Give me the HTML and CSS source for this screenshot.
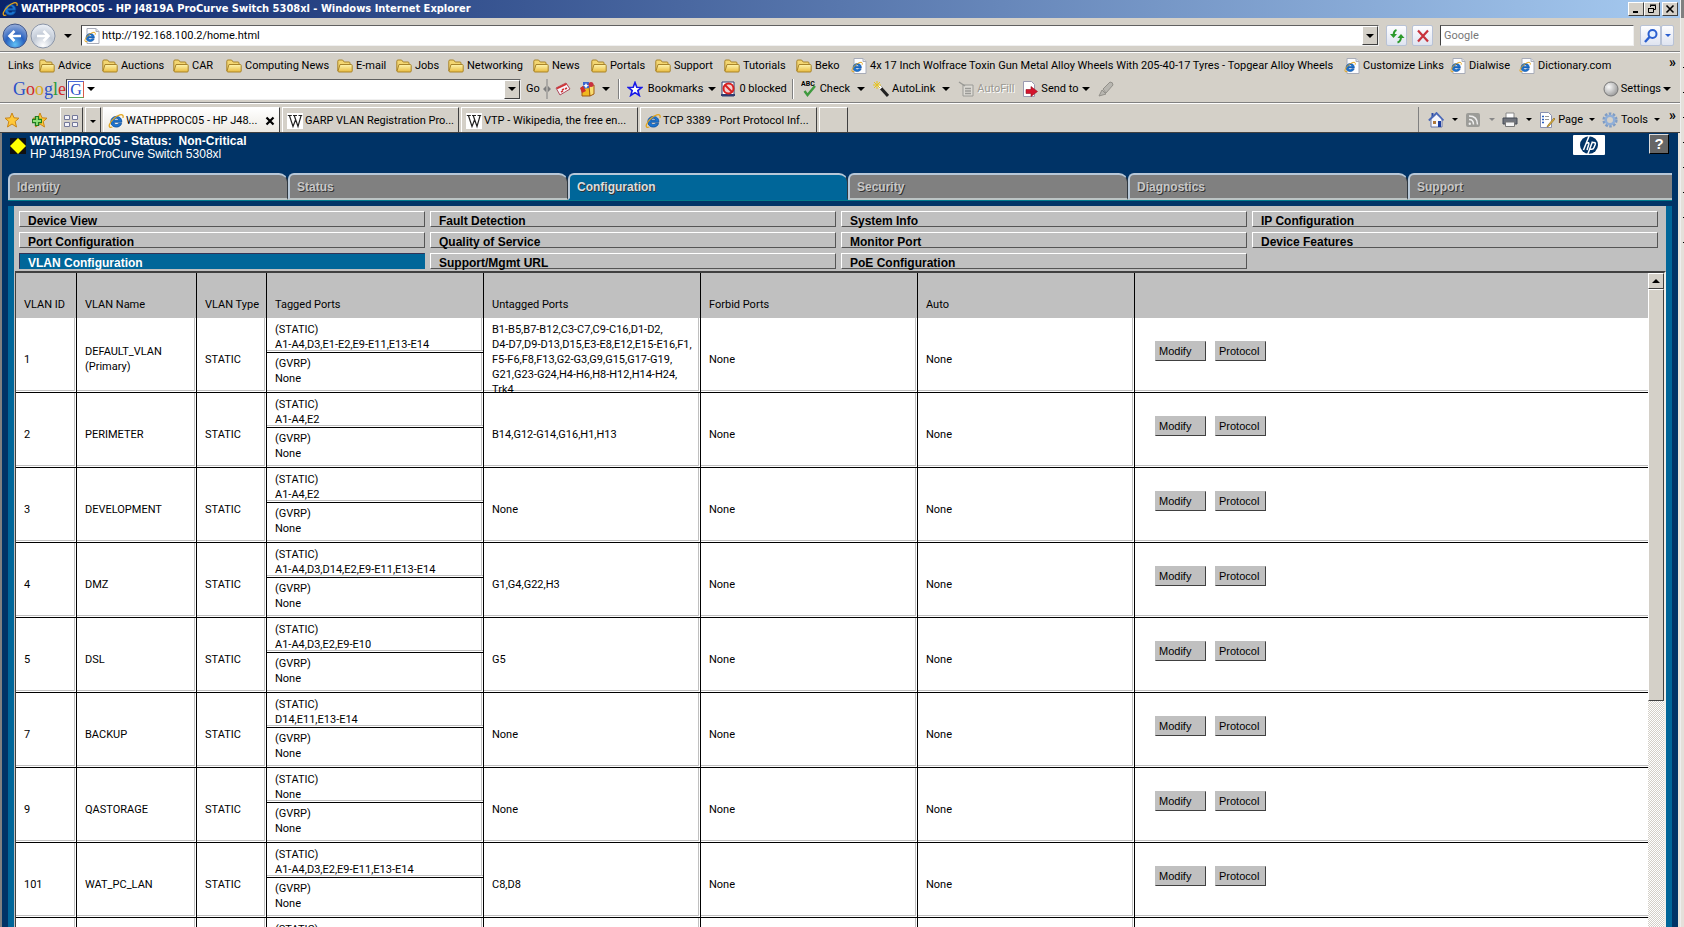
FILE: index.html
```
<!DOCTYPE html>
<html lang="en">
<head>
<meta charset="utf-8">
<title>WATHPPROC05 - HP J4819A ProCurve Switch 5308xl</title>
<link rel="stylesheet" href="styles.css">
</head>
<body>
<svg class="defs" aria-hidden="true">
  <defs>
    <linearGradient id="gFolder" x1="0" y1="0" x2="0" y2="1"><stop offset="0" stop-color="#fff6b0"/><stop offset="1" stop-color="#e8b93c"/></linearGradient>
    <radialGradient id="gBack" cx=".5" cy=".85" r=".8"><stop offset="0" stop-color="#5fc0f5"/><stop offset=".5" stop-color="#2a62c0"/><stop offset="1" stop-color="#8fa8d8"/></radialGradient>
    <radialGradient id="gFwd" cx=".5" cy=".9" r=".9"><stop offset="0" stop-color="#ffffff"/><stop offset=".5" stop-color="#c2cad6"/><stop offset="1" stop-color="#eef2f8"/></radialGradient>
    <radialGradient id="gBall" cx=".35" cy=".35" r=".7"><stop offset="0" stop-color="#fafafa"/><stop offset="1" stop-color="#9a9a9a"/></radialGradient>
  </defs>
  <symbol id="folder" viewBox="0 0 16 16"><path d="M.8 13V3.200Q.8 2 2 2h3.600l1.600 2H12q1 0 1 1v1.600" fill="#f3d672" stroke="#a9842a"/><path d="M3 6.500h11.200q1 0 1 1V13q0 1-1 1H2q-1 0-1-1z" fill="url(#gFolder)" stroke="#a9842a"/></symbol>
  <symbol id="ie" viewBox="0 0 16 16"><path d="M13.800 9.200H5.900c.2 1.500 1.200 2.300 2.500 2.300 1 0 1.700-.4 2.100-1.100h3.100c-.7 2.200-2.600 3.700-5.200 3.700-3.400 0-5.600-2.200-5.600-5.300 0-3.200 2.300-5.400 5.600-5.400 3.500 0 5.600 2.400 5.400 5.800zM6 7.200h4.600C10.500 6 9.600 5.200 8.300 5.200 7.100 5.200 6.200 6 6 7.200z" fill="#1b74d0" stroke="#0d4c9c" stroke-width=".8"/><path d="M14.900 4.900c.8-2.400-.4-3.700-3-3C7.800 3 3 7.500 1.500 11.500c-.8 2.300.3 3.500 2.800 2.500" fill="none" stroke="#e3a51c" stroke-width="1.300"/></symbol>
  <symbol id="iepage" viewBox="0 0 16 16"><path d="M3 .5h9l3 3v12H3z" fill="#fdfdff" stroke="#a8acb8"/><path d="M12 .5v3h3" fill="#dfe4ee" stroke="#a8acb8"/><svg x="0" y="3" width="12" height="12"><use href="#ie" width="12" height="12"/></svg></symbol>
  <symbol id="wiki" viewBox="0 0 16 16"><path d="M0 0h16v16H0z" fill="#fff"/><path d="M.8 2.500h4M6 2.500h4M11.500 2.500h3.700M2.500 2.800L6 13.500l2.500-6.500M7.300 2.800L11 13.500 14 2.800" fill="none" stroke="#222" stroke-width="1.200"/></symbol>
  <symbol id="star" viewBox="0 0 16 16"><path d="M8 1l2 4.800 5 .4-3.800 3.300L12.500 15 8 12l-4.500 3 1.300-5.500L1 6.200l5-.4z" fill="#ffc93a" stroke="#c98518"/></symbol>
</svg>

<div class="desktop">
<div class="window">
  <header class="titlebar">
    <svg class="i16"><use href="#ie"/></svg>
    <h1>WATHPPROC05 - HP J4819A ProCurve Switch 5308xl - Windows Internet Explorer</h1>
    <div class="winbtns">
      <button aria-label="Minimize"><svg viewBox="0 0 12 10"><path d="M3 8h5" stroke="#000" stroke-width="2"/></svg></button>
      <button aria-label="Restore"><svg viewBox="0 0 12 10"><path d="M4.500 3V1.500h5v4H8M4 1h6M2.500 4.500h5v4h-5zM2 4.500h6" fill="none" stroke="#000"/></svg></button>
      <button aria-label="Close" class="close"><svg viewBox="0 0 12 10"><path d="M2.500 1.500l7 7M9.500 1.500l-7 7" stroke="#000" stroke-width="1.600"/></svg></button>
    </div>
  </header>

  <div class="navrow">
    <div class="travel">
      <button aria-label="Back"><svg width="26" height="26" viewBox="0 0 26 26"><circle cx="13" cy="13" r="12" fill="url(#gBack)" stroke="#43598c"/><path d="M19 13H8M12.500 8L7.500 13l5 5" fill="none" stroke="#fff" stroke-width="2.600"/></svg></button>
      <button aria-label="Forward"><svg width="26" height="26" viewBox="0 0 26 26"><circle cx="13" cy="13" r="12" fill="url(#gFwd)" stroke="#8a94a6"/><path d="M7 13h11M13.500 8l5 5-5 5" fill="none" stroke="#fff" stroke-width="2.600"/></svg></button>
      <span class="caret"></span>
    </div>
    <div class="field address">
      <svg class="i16"><use href="#iepage"/></svg>
      <input type="text" aria-label="Address" value="http://192.168.100.2/home.html">
      <button class="drop" aria-label="Show addresses"><span class="caret"></span></button>
    </div>
    <button class="soft" aria-label="Refresh"><svg class="i16" viewBox="0 0 16 16"><path d="M7.500 2Q4.500 3 4.500 8" fill="none" stroke="#2c9a2c" stroke-width="2"/><path d="M1 6h7l-3.500 4z" fill="#2c9a2c"/><path d="M8.500 14.500q3.500-1 3.500-6" fill="none" stroke="#2c9a2c" stroke-width="2"/><path d="M8.500 10h7L12 6z" fill="#2c9a2c"/></svg></button>
    <button class="soft" aria-label="Stop"><svg class="i16" viewBox="0 0 16 16"><path d="M3 2.500l10 11M13 2.500l-10 11" stroke="#c8323c" stroke-width="2.200"/></svg></button>
    <div class="field search"><input type="text" aria-label="Search" placeholder="Google"></div>
    <div class="pair">
      <button class="soft" aria-label="Go search"><svg class="i16" viewBox="0 0 16 16"><circle cx="9.500" cy="6" r="4" fill="#e4f0ff" stroke="#2a5fd0" stroke-width="2"/><path d="M6.500 9L2 14" stroke="#2a5fd0" stroke-width="2.400"/></svg></button>
      <button class="soft thin" aria-label="Search options"><span class="caret blue"></span></button>
    </div>
  </div>

  <nav class="links" aria-label="Links">
    <span>Links</span>
    <a href="#"><svg class="i16"><use href="#folder"/></svg>Advice</a>
    <a href="#"><svg class="i16"><use href="#folder"/></svg>Auctions</a>
    <a href="#"><svg class="i16"><use href="#folder"/></svg>CAR</a>
    <a href="#"><svg class="i16"><use href="#folder"/></svg>Computing News</a>
    <a href="#"><svg class="i16"><use href="#folder"/></svg>E-mail</a>
    <a href="#"><svg class="i16"><use href="#folder"/></svg>Jobs</a>
    <a href="#"><svg class="i16"><use href="#folder"/></svg>Networking</a>
    <a href="#"><svg class="i16"><use href="#folder"/></svg>News</a>
    <a href="#"><svg class="i16"><use href="#folder"/></svg>Portals</a>
    <a href="#"><svg class="i16"><use href="#folder"/></svg>Support</a>
    <a href="#"><svg class="i16"><use href="#folder"/></svg>Tutorials</a>
    <a href="#"><svg class="i16"><use href="#folder"/></svg>Beko</a>
    <a href="#"><svg class="i16"><use href="#iepage"/></svg>4x 17 Inch Wolfrace Toxin Gun Metal Alloy Wheels With 205-40-17 Tyres - Topgear Alloy Wheels</a>
    <a href="#"><svg class="i16"><use href="#iepage"/></svg>Customize Links</a>
    <a href="#"><svg class="i16"><use href="#iepage"/></svg>Dialwise</a>
    <a href="#"><svg class="i16"><use href="#iepage"/></svg>Dictionary.com</a>
    <b class="more">»</b>
  </nav>

  <div class="google">
    <span class="glogo"><i class="b">G</i><i class="r">o</i><i class="y">o</i><i class="b">g</i><i class="g">l</i><i class="r">e</i></span>
    <div class="field gfield">
      <span class="gbox">G</span><span class="caret"></span>
      <input type="text" aria-label="Google search">
      <button class="drop" aria-label="Search history"><span class="caret"></span></button>
    </div>
    <button class="t go">Go</button>
    <svg class="split" viewBox="0 0 10 20"><path d="M5 0v20" stroke="#808080"/><path d="M4 7v6L1 10zM6 7v6l3-3z" fill="#808080"/></svg>
    <button class="t" aria-label="News"><svg class="i16" viewBox="0 0 16 16"><path d="M1 7l10-5 4 6-10 6z" fill="#f5f2f8" stroke="#b04a5a"/><path d="M2 7.500l9.500-4.500M7 9l2-1M10 8l2-1M6 11l2-1" stroke="#d03030" stroke-width="1.600"/></svg></button>
    <button class="t" aria-label="Gadgets"><svg class="i16" viewBox="0 0 16 16"><path d="M3 6h8v9H3z" fill="#f0b820" stroke="#a05a10"/><path d="M10 5l5-1v9l-4 2z" fill="#f8dc70" stroke="#a05a10"/><path d="M4 1l6 0 0 6-6 1z" fill="#3a66d0"/><path d="M1 7l3-2 3 5-4 2z" fill="#d0302a"/><circle cx="12" cy="3.500" r="2.500" fill="#c83040"/><path d="M7 2l1 2 2 .5-2 1-1 2-1-2-2-1 2-.5z" fill="#fff"/></svg><span class="caret far"></span></button>
    <span class="sep"></span>
    <button class="t bookmarks"><svg class="i16" viewBox="0 0 16 16"><path d="M8 1.500l1.800 4.700 5 .2-4 3.200 1.500 4.900L8 11.700l-4.300 2.800 1.500-4.900-4-3.200 5-.2z" fill="#fff" stroke="#1818e8" stroke-width="1.600"/></svg>Bookmarks<span class="caret"></span></button>
    <button class="t blocked"><svg class="i16" viewBox="0 0 16 16"><path d="M2 1h12v14H2z" fill="#fff" stroke="#303c70"/><path d="M1 14h14" stroke="#303c70" stroke-width="2"/><circle cx="8.500" cy="7.500" r="5" fill="#f4d0d0" stroke="#d82020" stroke-width="2"/><path d="M5 4l7 7" stroke="#d82020" stroke-width="2"/></svg>0 blocked</button>
    <span class="sep"></span>
    <button class="t"><svg class="i16" viewBox="0 0 16 16"><text x="0" y="5" class="abc">ABC</text><path d="M3.500 10l3 4L14 5" fill="none" stroke="#3f9a3f" stroke-width="2.400"/></svg>Check<span class="caret far"></span></button>
    <button class="t"><svg class="i16" viewBox="0 0 16 16"><path d="M6 5l9 10" stroke="#222" stroke-width="3"/><path d="M5.500 4.500l2.500 3" stroke="#fff" stroke-width="3"/><path d="M4 0v8M0 4h8M1 1l6 6M7 1L1 7" stroke="#e6c21c"/></svg>AutoLink<span class="caret far"></span></button>
    <button class="t off" disabled><svg class="i16" viewBox="0 0 16 16"><path d="M5 4h10v11H5z" fill="#dcdad4" stroke="#9a9a96"/><path d="M7 7.500h6M7 10h6M7 12.500h6M1 1l6 4" stroke="#9a9a96" stroke-width="1.500"/></svg>AutoFill</button>
    <button class="t"><svg class="i16" viewBox="0 0 16 16"><path d="M1.500.5h8l3 3v12h-11z" fill="#fff" stroke="#9a9ab0"/><path d="M4 8.500h5V5.500l6.500 5L9 15.500v-3H4z" fill="#d4142c" stroke="#901020" stroke-width=".6"/></svg>Send to<span class="caret"></span></button>
    <button class="t off" disabled aria-label="Highlight"><svg class="i16" viewBox="0 0 16 16"><path d="M1 15l3-6 4 4zM5 8l7-7q3 0 3 3l-7 8z" fill="#b8b6b0" stroke="#92908a"/></svg></button>
    <button class="t settings"><svg class="i16" viewBox="0 0 16 16"><circle cx="8" cy="8" r="7" fill="url(#gBall)" stroke="#777"/></svg>Settings<span class="caret"></span></button>
  </div>

  <div class="tabrow">
    <button class="fav" aria-label="Favorites"><svg class="i16"><use href="#star"/></svg></button>
    <button class="fav" aria-label="Add to favorites"><svg class="i16" viewBox="0 0 16 16"><use href="#star"/><path d="M5 4v10M0 9h10" stroke="#1f7d1f" stroke-width="4.400"/><path d="M5 5v8M1 9h8" stroke="#8ee07a" stroke-width="1.800"/></svg></button>
    <button class="tab quad" aria-label="Quick tabs"><svg class="i16" viewBox="0 0 16 16"><path d="M1.500 2.500h5v4h-5zM9.500 2.500h5v4h-5zM1.500 9.500h5v4h-5zM9.500 9.500h5v4h-5z" fill="#f4f4fa" stroke="#74789a"/></svg></button>
    <button class="tab list" aria-label="Tab list"><span class="caret small"></span></button>
    <button class="tab on"><svg class="i16"><use href="#ie"/></svg>WATHPPROC05 - HP J48...<svg class="x" viewBox="0 0 10 10"><path d="M1.500 1.500l7 7M8.500 1.500l-7 7" stroke="#000" stroke-width="2.200"/></svg></button>
    <button class="tab"><svg class="i16"><use href="#wiki"/></svg>GARP VLAN Registration Pro...</button>
    <button class="tab"><svg class="i16"><use href="#wiki"/></svg>VTP - Wikipedia, the free en...</button>
    <button class="tab"><svg class="i16"><use href="#ie"/></svg>TCP 3389 - Port Protocol Inf...</button>
    <button class="tab new" aria-label="New tab"></button>
    <div class="cmds">
      <button class="c" aria-label="Home"><svg class="i16" viewBox="0 0 16 16"><path d="M3 7v8h11V7L8.500 2z" fill="#f6f6fc" stroke="#6a78a8"/><path d="M3.500 1h2v4h-2z" fill="#2a4aa8"/><path d="M.8 8.500L8.500 1l7 7.500" fill="none" stroke="#4a68b8" stroke-width="1.800"/><path d="M10 9h3v6h-3z" fill="#1f3fa0"/><path d="M5 9h3v3H5z" fill="#b07838"/></svg><span class="caret small"></span></button>
      <button class="c" aria-label="Feeds"><svg class="i16" viewBox="0 0 16 16"><rect x="1" y="1" width="14" height="14" rx="2" fill="#9c9c98"/><path d="M4 7.500q4.500 0 4.500 5M4 4q8.500 0 8.500 8.500" fill="none" stroke="#eee" stroke-width="1.500"/><circle cx="4.800" cy="11.800" r="1.200" fill="#eee"/></svg><span class="caret small gray"></span></button>
      <button class="c" aria-label="Print"><svg class="i16" viewBox="0 0 16 16"><path d="M4 1h8v6H4z" fill="#fff" stroke="#888"/><path d="M1 6h14v6H1z" fill="#70747c" stroke="#444a54"/><path d="M3.500 10h9v4.500h-9z" fill="#f4f4f4" stroke="#777"/></svg><span class="caret small"></span></button>
      <button class="c page"><svg class="i16" viewBox="0 0 16 16"><path d="M1.500.5h8l3 3v12h-11z" fill="#fff" stroke="#8890b0"/><path d="M3 4.500h2M3 7.500h2M3 10.500h2" stroke="#2a5fc0" stroke-width="1.500"/><path d="M6 4.500h4M6 7.500h4" stroke="#999"/><path d="M15 6l-6 7-1 2 2-1 6-7z" fill="#e8b83c" stroke="#8a6a20" stroke-width=".7"/></svg>Page<span class="caret small"></span></button>
      <button class="c tools"><svg class="i16" viewBox="0 0 16 16"><circle cx="8" cy="8" r="6.300" fill="none" stroke="#7f9cc4" stroke-width="2.600" stroke-dasharray="2.500 1.460"/><circle cx="8" cy="8" r="4.300" fill="#d4d0c8" stroke="#8faed8" stroke-width="2.600"/></svg>Tools<span class="caret small"></span></button>
      <b class="more">»</b>
    </div>
  </div>

  <main class="page-area">
    <div class="device">
      <svg class="i16" viewBox="0 0 16 16"><path d="M0 0h16v16H0z" fill="#111"/><path d="M8 0l8 8-8 8-8-8z" fill="#ff0"/></svg>
      <div class="ident"><strong>WATHPPROC05 - Status:&nbsp; Non-Critical</strong><span>HP J4819A ProCurve Switch 5308xl</span></div>
      <svg class="hp" viewBox="0 0 32 20" role="img" aria-label="hp"><rect width="32" height="20" rx="1" fill="#fff"/><ellipse cx="16" cy="10" rx="9" ry="8.800" fill="#036"/><path d="M16.500 0L10.500 15M13 8.500q3.500-2 2.700 1L14 15M19.500 6.500L14.500 20M18.500 7.500h2.500q1.800 0 1.200 2L21 12.500q-.6 1.800-2.500 1.800h-1.500" fill="none" stroke="#fff" stroke-width="1.500"/></svg>
      <button class="help">?</button>
    </div>
    <nav class="maintabs" aria-label="Sections">
      <a href="#">Identity</a><a href="#">Status</a><a href="#" class="sel">Configuration</a><a href="#">Security</a><a href="#">Diagnostics</a><a href="#">Support</a>
    </nav>
    <section class="frame">
      <nav class="subnav" aria-label="Configuration">
        <a href="#">Device View</a><a href="#">Fault Detection</a><a href="#">System Info</a><a href="#">IP Configuration</a>
        <a href="#">Port Configuration</a><a href="#">Quality of Service</a><a href="#">Monitor Port</a><a href="#">Device Features</a>
        <a href="#" class="sel">VLAN Configuration</a><a href="#">Support/Mgmt URL</a><a href="#">PoE Configuration</a>
      </nav>
      <div class="listing">
        <div class="scroller">
        <table>
          <colgroup><col class="c1"><col class="c2"><col class="c3"><col class="c4"><col class="c4"><col class="c4"><col class="c4"><col></colgroup>
          <thead><tr><th>VLAN ID</th><th>VLAN Name</th><th>VLAN Type</th><th>Tagged Ports</th><th>Untagged Ports</th><th>Forbid Ports</th><th>Auto</th><th></th></tr></thead>
          <tbody>
            <tr><td><div>1</div></td><td><div>DEFAULT_VLAN<br>(Primary)</div></td><td><div>STATIC</div></td><td class="tg"><p>(STATIC)<br>A1-A4,D3,E1-E2,E9-E11,E13-E14</p><p>(GVRP)<br>None</p></td><td><div>B1-B5,B7-B12,C3-C7,C9-C16,D1-D2,<br>D4-D7,D9-D13,D15,E3-E8,E12,E15-E16,F1,<br>F5-F6,F8,F13,G2-G3,G9,G15,G17-G19,<br>G21,G23-G24,H4-H6,H8-H12,H14-H24,<br>Trk4</div></td><td><div>None</div></td><td><div>None</div></td><td class="act"><button>Modify</button><button>Protocol</button></td></tr>
            <tr><td><div>2</div></td><td><div>PERIMETER</div></td><td><div>STATIC</div></td><td class="tg"><p>(STATIC)<br>A1-A4,E2</p><p>(GVRP)<br>None</p></td><td><div>B14,G12-G14,G16,H1,H13</div></td><td><div>None</div></td><td><div>None</div></td><td class="act"><button>Modify</button><button>Protocol</button></td></tr>
            <tr><td><div>3</div></td><td><div>DEVELOPMENT</div></td><td><div>STATIC</div></td><td class="tg"><p>(STATIC)<br>A1-A4,E2</p><p>(GVRP)<br>None</p></td><td><div>None</div></td><td><div>None</div></td><td><div>None</div></td><td class="act"><button>Modify</button><button>Protocol</button></td></tr>
            <tr><td><div>4</div></td><td><div>DMZ</div></td><td><div>STATIC</div></td><td class="tg"><p>(STATIC)<br>A1-A4,D3,D14,E2,E9-E11,E13-E14</p><p>(GVRP)<br>None</p></td><td><div>G1,G4,G22,H3</div></td><td><div>None</div></td><td><div>None</div></td><td class="act"><button>Modify</button><button>Protocol</button></td></tr>
            <tr><td><div>5</div></td><td><div>DSL</div></td><td><div>STATIC</div></td><td class="tg"><p>(STATIC)<br>A1-A4,D3,E2,E9-E10</p><p>(GVRP)<br>None</p></td><td><div>G5</div></td><td><div>None</div></td><td><div>None</div></td><td class="act"><button>Modify</button><button>Protocol</button></td></tr>
            <tr><td><div>7</div></td><td><div>BACKUP</div></td><td><div>STATIC</div></td><td class="tg"><p>(STATIC)<br>D14,E11,E13-E14</p><p>(GVRP)<br>None</p></td><td><div>None</div></td><td><div>None</div></td><td><div>None</div></td><td class="act"><button>Modify</button><button>Protocol</button></td></tr>
            <tr><td><div>9</div></td><td><div>QASTORAGE</div></td><td><div>STATIC</div></td><td class="tg"><p>(STATIC)<br>None</p><p>(GVRP)<br>None</p></td><td><div>None</div></td><td><div>None</div></td><td><div>None</div></td><td class="act"><button>Modify</button><button>Protocol</button></td></tr>
            <tr><td><div>101</div></td><td><div>WAT_PC_LAN</div></td><td><div>STATIC</div></td><td class="tg"><p>(STATIC)<br>A1-A4,D3,E2,E9-E11,E13-E14</p><p>(GVRP)<br>None</p></td><td><div>C8,D8</div></td><td><div>None</div></td><td><div>None</div></td><td class="act"><button>Modify</button><button>Protocol</button></td></tr>
            <tr><td><div></div></td><td><div></div></td><td><div></div></td><td class="tg"><p>(STATIC)</p><p></p></td><td><div></div></td><td><div></div></td><td><div></div></td><td class="act"></td></tr>
          </tbody>
        </table>
        </div>
        <div class="scrollbar"><button class="up" aria-label="Scroll up"><span class="caret rise"></span></button><div class="thumb"></div></div>
      </div>
    </section>
  </main>
</div>
<div class="edge"></div>
</div>
</body>
</html>
```
FILE: styles.css
```
:root {
  --face: #d4d0c8;
  --navy: #003366;
  --teal: #006699;
  --panel: #c0c0c0;
  --ui: Roboto, "Noto Sans", sans-serif;
  --app: "Liberation Sans", Arial, sans-serif;
}
* { box-sizing: border-box; }
body { margin: 0; background: var(--face); font: 11px/14px var(--ui); color: #000; overflow: hidden; }
button, input { font: inherit; color: inherit; margin: 0; padding: 0; border: 0; background: none; }
a { color: inherit; text-decoration: none; }
.defs { position: absolute; width: 0; height: 0; }
.i16 { width: 16px; height: 16px; flex: none; display: block; }
.desktop { display: flex; height: 100vh; }
.window { flex: 1; min-width: 0; display: flex; flex-direction: column; }
.edge { width: 4px; background:
  repeating-linear-gradient(transparent 0 24px, #000 24px 25px) right 43px / 1px 200px no-repeat,
  linear-gradient(#808080, #808080) 0 0 / 4px 18px no-repeat, #e4e0da; border-left: 1px solid #eee; }

.caret { width: 0; height: 0; flex: none; border: solid transparent; border-width: 4px 4px 0; border-top-color: #000; }
.caret.small { border-width: 3px 3px 0; }
.caret.blue { border-width: 3px 3px 0; border-top-color: #2a5fd0; }
.caret.gray { border-top-color: #888; }
.caret.rise { border-width: 0 4px 4px; border-color: transparent transparent #000; }
.more { font-size: 14px; line-height: 10px; }

.titlebar { height: 18px; flex: none; display: flex; align-items: center; gap: 3px; padding: 0 2px; background: linear-gradient(90deg, #0a246a, #a6caf0); color: #fff; }
.titlebar h1 { margin: 0; flex: 1; font: bold 11px/16px "DejaVu Sans Condensed", "DejaVu Sans", sans-serif; white-space: nowrap; }
.winbtns { display: flex; }
.winbtns button { width: 16px; height: 14px; background: var(--face); border: 1px solid; border-color: #fff #404040 #404040 #fff; display: flex; align-items: center; justify-content: center; }
.winbtns svg { width: 12px; height: 10px; }
.winbtns .close { margin-left: 2px; }

.navrow { height: 34px; flex: none; display: flex; align-items: center; padding: 2px 6px 0 2px; border-bottom: 1px solid #808080; }
.travel { width: 79px; display: flex; align-items: center; gap: 2px; }
.travel svg { display: block; }
.travel .caret { margin-left: 6px; }
.field { background: #fff; border: 1px solid; border-color: #606060 #f0f0f0 #f0f0f0 #404040; display: flex; align-items: center; height: 21px; }
.field input { flex: 1; min-width: 0; outline: 0; }
.address { flex: 1; padding-left: 2px; gap: 2px; margin-right: 7px; }
.drop { width: 16px; height: 19px; background: var(--face); border: 1px solid; border-color: #fff #404040 #404040 #fff; display: flex; align-items: center; justify-content: center; flex: none; }
.soft { width: 21px; height: 21px; border: 1px solid #b8c2d6; border-radius: 2px; background: linear-gradient(#fdfdff, #dfe4f0); display: flex; align-items: center; justify-content: center; margin-right: 5px; }
.search { width: 194px; margin: 0 6px 0 2px; padding-left: 3px; }
.search input::placeholder { color: #777; opacity: 1; }
.pair { display: flex; }
.pair .soft { margin: 0; }
.pair .thin { width: 13px; }

.links { height: 26px; flex: none; display: grid; align-items: center; white-space: nowrap; padding: 0 4px 0 8px; border-top: 1px solid #fff;
  grid-template-columns: 31px 63px 71px 53px 111px 59px 52px 85px 58px 64px 69px 72px 55px 493px 106px 69px 90px 1fr; }
.links a { display: flex; align-items: center; gap: 3px; }
.links .more { justify-self: end; align-self: start; margin-top: 4px; }

.google { height: 25px; flex: none; display: flex; align-items: center; padding: 0 9px 2px 13px; white-space: nowrap; border-bottom: 1px solid #808080; }
.glogo { width: 53px; font: 18px/20px "Liberation Serif", serif; flex: none; }
.glogo i { font-style: normal; }
.glogo .b { color: #2a50c8; } .glogo .r { color: #d02a2a; } .glogo .y { color: #d8a818; } .glogo .g { color: #2a9a3a; }
.gfield { width: 455px; flex: none; margin-right: 5px; padding-left: 1px; }
.gbox { width: 16px; height: 17px; margin-right: 3px; border: 1px solid; border-color: #4a6ad8 #d85a4a #58a858 #4a6ad8; color: #2a50c8; font: 16px/15px "Liberation Serif", serif; text-align: center; }
.t { display: flex; align-items: center; gap: 3px; margin-right: 8px; flex: none; }
.t.go { margin-right: 2px; }
.t .caret { margin-left: 1px; }
.t .caret.far { margin-left: 4px; }
.t.bookmarks { gap: 5px; margin-right: 4px; }
.t.bookmarks .caret { margin-left: 0; }
.t.blocked { margin-right: 5px; }
.t.off { color: #9a9892; text-shadow: 1px 1px #fff; }
.abc { font: bold 7px var(--ui); }
.split { width: 10px; height: 20px; flex: none; margin-right: 3px; }
.sep { width: 2px; height: 20px; flex: none; margin-right: 7px; border-left: 1px solid #808080; border-right: 1px solid #fff; }
.t.settings { margin: 0 0 0 auto; gap: 2px; }
.settings .caret { margin: 0; }

.tabrow { height: 30px; flex: none; display: flex; align-items: stretch; padding: 3px 4px 0; border-top: 1px solid #fff; border-bottom: 1px solid #404040; white-space: nowrap; }
.fav { width: 28px; display: flex; align-items: center; }
.tab { width: 177px; margin-right: 2px; display: flex; align-items: center; gap: 2px; padding: 2px 4px 0; border-top: 1px solid #fff; border-left: 1px solid #fff; border-right: 1px solid #404040; }
.tab.quad { width: 23px; padding: 2px 2px 0; }
.tab.list { width: 16px; }
.tab.on { background: linear-gradient(#fff, #ece9e2); }
.tab.new { width: 29px; }
.tab .x { width: 10px; height: 10px; margin-left: auto; }
.cmds { margin-left: auto; display: flex; align-items: center; border-left: 1px solid #808080; padding-left: 9px; }
.c { display: flex; align-items: center; gap: 8px; margin-right: 7px; }
.c.page, .c.tools { gap: 3px; }
.c.page .caret, .c.tools .caret { margin-left: 3px; }
.cmds .more { align-self: start; margin: 3px 0 0 2px; }

.page-area { flex: 1; min-height: 0; display: flex; flex-direction: column; background: var(--navy); border: solid; border-width: 0 2px; border-color: #808080 #e8e4dc #fff #808080; padding: 0 6px; font-family: var(--app); }
.device { height: 40px; flex: none; display: flex; align-items: flex-start; padding: 1px 3px 0 2px; color: #fff; font-size: 12px; line-height: 13px; }
.device > .i16 { margin: 4px 4px 0 0; }
.ident { flex: 1; display: grid; padding-top: 1px; }
.hp { width: 32px; height: 20px; margin: 1px 44px 0 0; }
.help { width: 20px; height: 20px; background: #666; border: 1px solid; border-color: #ddd #000 #000 #ddd; font: bold 15px/18px var(--app); }
.maintabs { flex: none; display: grid; grid-template-columns: repeat(5, 280fr) 264fr; border-bottom: 1px solid #007a8c; font: bold 12px/18px var(--app); }
.maintabs a { height: 27px; padding: 3px 0 0 7px; background: #808080; border: 2px solid #b8c8d8; border-right: 1px solid #303840; border-bottom-color: #bcc4c4; border-radius: 6px 9px 0 0; color: #c8c8c8; text-shadow: 1px 1px #333; }
.maintabs .sel { background: var(--teal); border-bottom-color: var(--teal); color: #ddd; }
.maintabs a:last-child { border-top-right-radius: 0; border-right: 0; }
.frame { flex: 1; min-height: 0; margin-top: 5px; border: solid var(--teal); border-width: 0 6px; background: var(--panel); display: flex; flex-direction: column; }
.subnav { flex: none; display: grid; grid-template-columns: repeat(4, 1fr); gap: 5px; padding: 5px 8px 2px 5px; font: bold 12px/17px var(--app); }
.subnav a { height: 16px; padding: 1px 0 0 8px; border: 1px solid; border-color: #fff #555 #555 #fff; white-space: nowrap; }
.subnav .sel { background: var(--teal); color: #fff; border-color: #335 var(--teal) var(--teal) #335; }

.listing { flex: 1; min-height: 0; margin-left: 1px; display: flex; border: 1px solid #404040; border-width: 2px 0 0 1px; border-right: 2px solid #f0eee8; background: #fff; }
.scroller { flex: 1; min-width: 0; overflow: hidden; }
table { width: 100%; border-collapse: separate; border-spacing: 0; table-layout: fixed; font: 11px/15px var(--ui); }
.c1 { width: 61px; } .c2 { width: 120px; } .c3 { width: 70px; } .c4 { width: 217px; }
th { height: 45px; padding: 17px 0 0 8px; background: var(--panel); border-right: 1px solid #000; font-weight: normal; text-align: left; white-space: nowrap; }
th:last-child { border-right: 0; }
td { height: 75px; padding: 0; border: solid #000; border-width: 0 1px 1px 0; box-shadow: inset -1px -1px #fff, inset -2px -2px #c0c0c0; white-space: nowrap; vertical-align: top; }
td > div { height: 74px; padding: 8px 0 0 8px; overflow: hidden; display: grid; align-content: center; }
.tg p { margin: 0; height: 35px; padding: 4px 0 0 8px; border-bottom: 1px solid #000; box-shadow: inset 0 -1px #fff, inset 0 -2px #c0c0c0; }
.tg p + p { height: 38px; padding-top: 3px; border: 0; box-shadow: none; }
td.act { border-right: 0; padding: 23px 0 0 20px; box-shadow: inset 0 -1px #fff, inset 0 -2px #c0c0c0; font-size: 0; }
.act button { width: 51px; height: 20px; margin-right: 9px; padding-left: 3px; background: var(--panel); border: 1px solid; border-color: var(--panel) #404040 #404040 var(--panel); font: 11px/16px var(--app); text-align: left; }
.scrollbar { width: 16px; flex: none; background: repeating-conic-gradient(#fff 0 25%, #d4d0c8 0 50%) 0 0 / 2px 2px; display: flex; flex-direction: column; }
.up { height: 16px; flex: none; display: flex; align-items: center; justify-content: center; }
.up, .thumb { background: var(--face); border: 1px solid; border-color: #fff #404040 #404040 #fff; }
.thumb { height: 63%; }
```
